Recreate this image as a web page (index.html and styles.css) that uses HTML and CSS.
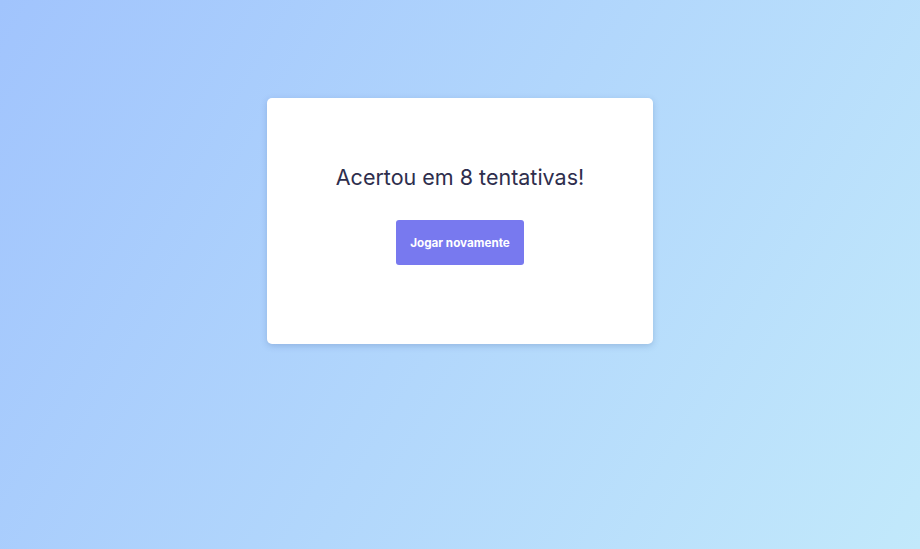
FILE: index.html
```html
<!DOCTYPE html>
<html lang="pt">
<head>
<meta charset="utf-8">
<title>Jogo</title>
<link rel="stylesheet" href="styles.css">
</head>
<body>
<main class="page">
  <section class="card">
    <h2 class="result">Acertou em 8 tentativas!</h2>
    <button class="btn" type="button">Jogar novamente</button>
  </section>
</main>
</body>
</html>
```

FILE: styles.css
```css
html, body {
  margin: 0;
  height: 100%;
}
body {
  background: linear-gradient(120deg, #a1c4fd 0%, #c2e9fb 100%);
  font-family: "Inter", "Noto Sans", sans-serif;
}
.page {
  display: flex;
  justify-content: center;
  padding-top: 98px;
}
.card {
  width: 386px;
  box-sizing: border-box;
  background: #fff;
  border-radius: 5px;
  box-shadow: 0 2px 6px rgba(60, 90, 150, 0.25);
  padding: 66px 20px 79px;
  display: flex;
  flex-direction: column;
  align-items: center;
}
.result {
  margin: 0;
  font-size: 21.5px;
  line-height: 26px;
  font-weight: 400;
  color: #2e2e4d;
}
.btn {
  margin-top: 30px;
  width: 128px;
  height: 45px;
  border: 0;
  border-radius: 3px;
  background: #7879ef;
  color: #fff;
  font-family: inherit;
  font-weight: 700;
  font-size: 11.7px;
  cursor: pointer;
}
```
